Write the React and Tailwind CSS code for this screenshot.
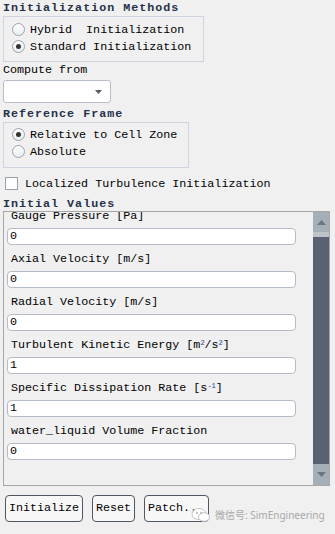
import React from 'react';

const mono = { fontFamily: '"Liberation Mono", "DejaVu Sans Mono", monospace' };

function Radio({ checked, label }) {
  return (
    <div className="flex items-center h-[17px] pl-[8px]">
      <span className="w-[13px] h-[13px] rounded-full border border-[#9aa3ad] bg-gradient-to-b from-[#ffffff] to-[#e9ecef] flex items-center justify-center">
        {checked && <span className="w-[5px] h-[5px] rounded-full bg-[#333]" />}
      </span>
      <span className="ml-[5px] text-[11.7px] leading-[14px] text-black whitespace-pre">{label}</span>
    </div>
  );
}

function Heading({ children, className = '' }) {
  return (
    <div className={`h-[14px] pl-[3px] text-[11.7px] leading-[14px] font-bold tracking-[1px] text-[#26304a] ${className}`}>
      {children}
    </div>
  );
}

function Field({ label, value }) {
  return (
    <div className="flex flex-col">
      <div className="h-[14px] pl-[4px] text-[11.7px] leading-[14px] text-black whitespace-pre">{label}</div>
      <div className="mt-[5px] h-[17px] w-[289px] rounded-[4px] border border-[#b3bcc7] bg-white pl-[2px] text-[11.7px] leading-[15px] text-black">
        {value}
      </div>
    </div>
  );
}

export default function App() {
  const fields = [
    { label: 'Gauge Pressure [Pa]', value: '0' },
    { label: 'Axial Velocity [m/s]', value: '0' },
    { label: 'Radial Velocity [m/s]', value: '0' },
    { label: <>Turbulent Kinetic Energy [m<sup className="text-[7px] text-[#1a3a9a]">2</sup>/s<sup className="text-[7px] text-[#1a3a9a]">2</sup>]</>, value: '1' },
    { label: <>Specific Dissipation Rate [s<sup className="text-[7px] text-[#1a3a9a]">-1</sup>]</>, value: '1' },
    { label: 'water_liquid Volume Fraction', value: '0' },
  ];

  return (
    <div className="w-[335px] h-[534px] bg-[#f0f0f0] overflow-hidden flex flex-col" style={mono}>
      <Heading className="mt-[1px]">Initialization Methods</Heading>
      <div className="ml-[3px] mt-[1px] w-[201px] h-[46px] border border-[#cdd4de] pt-[4px]">
        <Radio label="Hybrid  Initialization" />
        <Radio checked label="Standard Initialization" />
      </div>

      <div className="mt-[1px] h-[14px] pl-[3px] text-[11.7px] leading-[14px] text-black">Compute from</div>
      <div className="ml-[3px] mt-[3px] w-[108px] h-[23px] rounded-[3px] border border-[#b7bec8] bg-white flex items-center justify-end pr-[8px]">
        <svg width="7" height="4" viewBox="0 0 7 4">
          <path d="M0 0 H7 L3.5 4 Z" fill="#555b63" />
        </svg>
      </div>

      <Heading className="mt-[4px]">Reference Frame</Heading>
      <div className="ml-[3px] mt-[1px] w-[186px] h-[46px] border border-[#cdd4de] pt-[3px]">
        <Radio checked label="Relative to Cell Zone" />
        <Radio label="Absolute" />
      </div>

      <div className="mt-[7px] h-[17px] flex items-center pl-[5px]">
        <span className="w-[13px] h-[13px] border border-[#9aa3ad] bg-white" />
        <span className="ml-[7px] text-[11.7px] leading-[14px] text-black">Localized Turbulence Initialization</span>
      </div>

      <Heading className="mt-[5px]">Initial Values</Heading>
      <div className="ml-[3px] w-[327px] h-[275px] border border-[#a7a7a7] flex">
        <div className="flex-1 overflow-hidden pl-[3px]">
          <div className="mt-[-3px] flex flex-col gap-[7px]">
            {fields.map((f, i) => (
              <Field key={i} label={f.label} value={f.value} />
            ))}
          </div>
        </div>
        <div className="w-[16px] flex flex-col">
          <div className="h-[20px] bg-[#a4afb7] flex items-center justify-center">
            <svg width="9" height="5" viewBox="0 0 9 5">
              <path d="M0 5 H9 L4.5 0 Z" fill="#6c7580" />
            </svg>
          </div>
          <div className="h-[5px] bg-[#bcc4c9]" />
          <div className="flex-1 bg-[#5a6172]" />
          <div className="h-[21px] bg-[#a4afb7] flex items-center justify-center">
            <svg width="9" height="5" viewBox="0 0 9 5">
              <path d="M0 0 H9 L4.5 5 Z" fill="#6c7580" />
            </svg>
          </div>
        </div>
      </div>

      <div className="mt-[9px] flex items-start pl-[5px] gap-[9px]">
        <button className="w-[78px] h-[27px] rounded-[4px] border border-[#4f5862] bg-[#f7f7f7] text-[11.7px] text-black" style={mono}>Initialize</button>
        <button className="w-[43px] h-[27px] rounded-[4px] border border-[#4f5862] bg-[#f7f7f7] text-[11.7px] text-black" style={mono}>Reset</button>
        <button className="w-[65px] h-[27px] rounded-[4px] border border-[#4f5862] bg-[#f7f7f7] text-[11.7px] text-black text-left pl-[3px]" style={mono}>Patch...</button>
        <div className="ml-[-27px] mt-[12px] flex items-center gap-[4px]">
          <svg width="20" height="16" viewBox="0 0 20 16">
            <ellipse cx="8" cy="7" rx="7" ry="5.5" fill="#ffffff" stroke="#c4c4c4" strokeWidth="1" />
            <ellipse cx="13" cy="10" rx="5.5" ry="4.3" fill="#ffffff" stroke="#c4c4c4" strokeWidth="1" />
            <circle cx="6" cy="6" r="0.9" fill="#b0b0b0" />
            <circle cx="10" cy="6" r="0.9" fill="#b0b0b0" />
          </svg>
          <span className="text-[10px] text-[#a9a9a9] whitespace-nowrap" style={{ fontFamily: '"Noto Sans", "Noto Sans CJK SC", sans-serif' }}>
            微信号: SimEngineering
          </span>
        </div>
      </div>
    </div>
  );
}
